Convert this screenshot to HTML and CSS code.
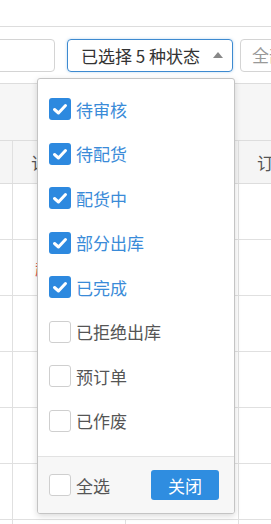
FILE: index.html
```html
<!DOCTYPE html>
<html lang="zh-CN">
<head>
  <meta charset="UTF-8" />
  <meta name="viewport" content="width=device-width, initial-scale=1.0" />
  <title>订单状态筛选</title>
  <link rel="stylesheet" href="styles.css">
</head>
<body>
  <div class="topbar"></div>

  <div class="toolbar">
    <div class="field field-left"></div>
    <div class="select">
      <span>已选择 5 种状态</span>
      <span class="caret"></span>
    </div>
    <div class="field field-right">全部类型</div>
  </div>

  <div class="band"></div>

  <div class="grid">
    <div class="row head">
      <div class="cell"></div>
      <div class="cell">订单号</div>
      <div class="cell">订单</div>
    </div>
    <div class="row"><div class="cell"></div><div class="cell"></div><div class="cell"></div></div>
    <div class="row"><div class="cell"></div><div class="cell warn">超时</div><div class="cell"></div></div>
    <div class="row"><div class="cell"></div><div class="cell"></div><div class="cell"></div></div>
    <div class="row"><div class="cell"></div><div class="cell"></div><div class="cell"></div></div>
    <div class="row"><div class="cell"></div><div class="cell"></div><div class="cell"></div></div>
    <div class="row"><div class="cell"></div><div class="cell"></div><div class="cell"></div></div>
    <div class="row split"><div class="cell"></div><div class="cell"></div><div class="cell"></div><div class="cell"></div></div>
  </div>

  <div class="dropdown">
    <ul class="options">
      <li class="option checked"><span class="box"><svg viewBox="0 0 22 22"><path d="M5.5 11.5 L9.5 15 L16.5 7.5"/></svg></span>待审核</li>
      <li class="option checked"><span class="box"><svg viewBox="0 0 22 22"><path d="M5.5 11.5 L9.5 15 L16.5 7.5"/></svg></span>待配货</li>
      <li class="option checked"><span class="box"><svg viewBox="0 0 22 22"><path d="M5.5 11.5 L9.5 15 L16.5 7.5"/></svg></span>配货中</li>
      <li class="option checked"><span class="box"><svg viewBox="0 0 22 22"><path d="M5.5 11.5 L9.5 15 L16.5 7.5"/></svg></span>部分出库</li>
      <li class="option checked"><span class="box"><svg viewBox="0 0 22 22"><path d="M5.5 11.5 L9.5 15 L16.5 7.5"/></svg></span>已完成</li>
      <li class="option"><span class="box"></span>已拒绝出库</li>
      <li class="option"><span class="box"></span>预订单</li>
      <li class="option"><span class="box"></span>已作废</li>
    </ul>
    <div class="dropdown-foot">
      <div class="option"><span class="box"></span>全选</div>
      <button class="close-btn">关闭</button>
    </div>
  </div>
</body>
</html>
```

FILE: styles.css
```css
body {
  margin: 0;
  width: 271px;
  height: 524px;
  overflow: hidden;
  position: relative;
  background: #ffffff;
  font-family: "Microsoft YaHei", "Noto Sans CJK SC", "Noto Sans", sans-serif;
  font-size: 17px;
  color: #555;
}
.topbar {
  height: 26px;
  border-bottom: 1px solid #dddddd;
}
.toolbar {
  display: flex;
  align-items: center;
  height: 56px;
  border-bottom: 1px solid #dddddd;
  white-space: nowrap;
}
.field {
  flex: none;
  box-sizing: border-box;
  height: 33px;
  border: 1px solid #d4d4d4;
  border-radius: 4px;
  background: #fff;
}
.field-left {
  width: 100px;
  margin-left: -45px;
}
.field-right {
  width: 120px;
  margin-left: 7px;
  padding-left: 11px;
  line-height: 30px;
  color: #999;
}
.select {
  flex: none;
  box-sizing: border-box;
  display: flex;
  align-items: center;
  justify-content: space-between;
  width: 166px;
  height: 33px;
  margin-left: 12px;
  padding: 0 8px 0 13px;
  border: 1px solid #3d8ad0;
  border-radius: 4px;
  box-shadow: 0 0 3px rgba(61,138,208,0.35);
  color: #333;
}
.caret {
  width: 0;
  height: 0;
  border-left: 5.5px solid transparent;
  border-right: 5.5px solid transparent;
  border-bottom: 6px solid #888;
  margin-right: 1px;
}
.band {
  height: 56px;
  background: #f6f6f6;
  border-bottom: 1px solid #dddddd;
}
.grid .row {
  display: grid;
  grid-template-columns: 12px 226px 1fr;
  height: 55px;
  border-bottom: 1px solid #e0e0e0;
}
.grid .row.head {
  height: 42px;
  background: #f5f5f5;
  border-bottom-color: #dddddd;
}
.grid .row.split {
  grid-template-columns: 12px 113px 113px 1fr;
}
.cell {
  border-left: 1px solid #e0e0e0;
  padding-left: 22px;
  display: flex;
  align-items: center;
  white-space: nowrap;
  overflow: hidden;
}
.cell:first-child {
  border-left: none;
  padding-left: 0;
}
.head .cell {
  padding-left: 18px;
  color: #555;
}
.warn {
  color: #d9534f;
}
.dropdown {
  position: absolute;
  left: 37px;
  top: 78px;
  width: 198px;
  box-sizing: border-box;
  background: #fff;
  border: 1px solid #c4c4c4;
  border-radius: 3px;
  box-shadow: 0 2px 6px rgba(0,0,0,0.15);
  overflow: hidden;
}
.options {
  list-style: none;
  margin: 0;
  padding: 8px 0 13px 0;
}
.option {
  display: flex;
  align-items: center;
  height: 44.5px;
  padding-left: 11px;
  color: #555;
}
.option.checked {
  color: #3a8bd8;
}
.box {
  flex: none;
  box-sizing: border-box;
  width: 22px;
  height: 22px;
  margin-right: 5px;
  border: 1px solid #cfcfcf;
  border-radius: 3px;
  background: #fff;
}
.box svg {
  display: block;
  width: 22px;
  height: 22px;
}
.box path {
  fill: none;
  stroke: #fff;
  stroke-width: 3;
  stroke-linecap: round;
  stroke-linejoin: round;
}
.checked .box {
  border: none;
  background: #2d89df;
}
.dropdown-foot {
  display: flex;
  align-items: center;
  justify-content: space-between;
  height: 56px;
  padding-right: 15px;
  background: #f7f7f7;
  border-top: 1px solid #e2e2e2;
}
.dropdown-foot .option {
  height: auto;
}
.close-btn {
  width: 68px;
  height: 30px;
  border: none;
  border-radius: 3px;
  background: #2f8de0;
  color: #fff;
  font-family: inherit;
  font-size: 17px;
  padding: 0;
  cursor: pointer;
}
```
